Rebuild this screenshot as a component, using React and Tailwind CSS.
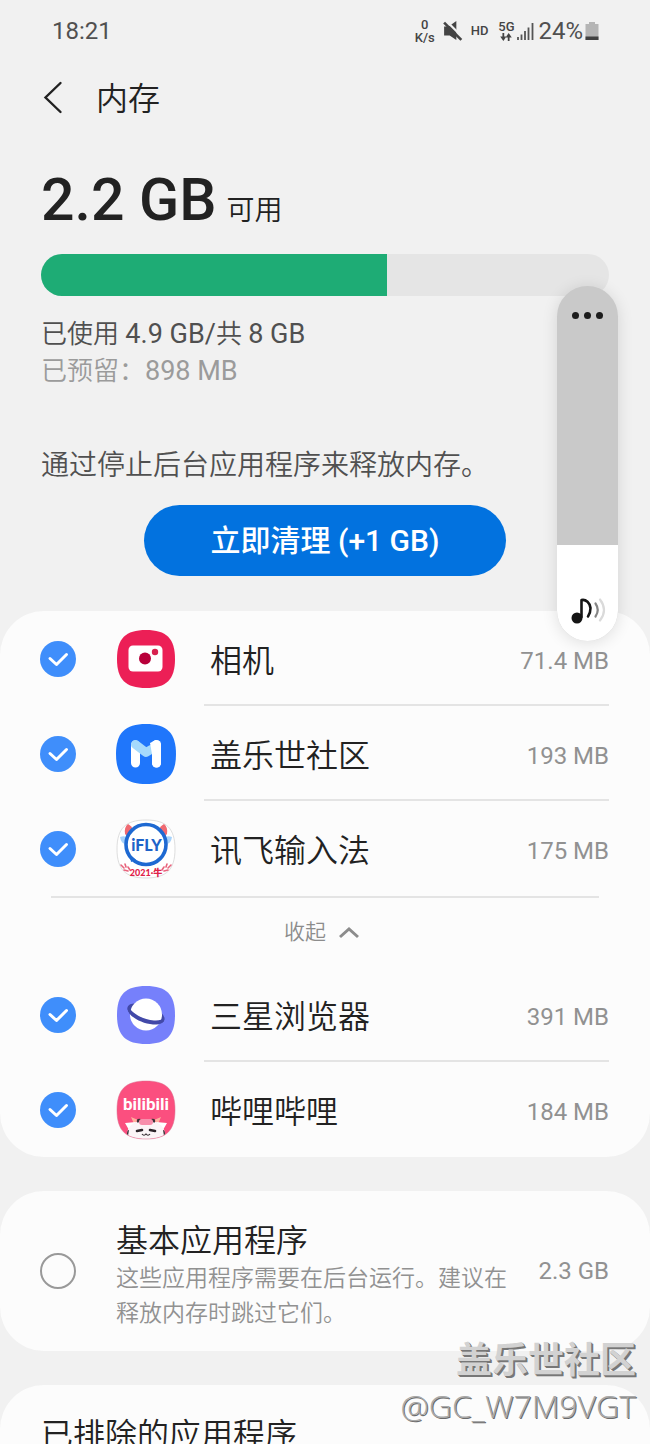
import React, { useState } from "react";

const SQUIRCLE =
  "M30 1C50.500 1 59 9.500 59 30C59 50.500 50.500 59 30 59C9.500 59 1 50.500 1 30C1 9.500 9.500 1 30 1Z";

function CameraIcon() {
  return (
    <svg viewBox="0 0 60 60" className="size-15" aria-hidden="true">
      <path d={SQUIRCLE} fill="#ec1f56" />
      <rect x="12.500" y="16.500" width="34" height="26" rx="4.500" fill="#fff" />
      <circle cx="29" cy="29.500" r="6" fill="#b8003a" />
      <circle cx="39" cy="23" r="3.200" fill="#d8214f" />
    </svg>
  );
}

function CommunityIcon() {
  return (
    <svg viewBox="0 0 60 60" className="size-15" aria-hidden="true">
      <path
        d="M30 0C51 0 60 9 60 30C60 51 51 60 30 60C9 60 0 51 0 30C0 9 9 0 30 0Z"
        fill="#1f76fb"
      />
      <path d="M19.500 21V39M40.500 21V39" stroke="#fff" strokeWidth="9" strokeLinecap="round" fill="none" />
      <path d="M19.500 20.500L30 28.500L35 25.500" stroke="#a5dafc" strokeWidth="9" strokeLinecap="round" strokeLinejoin="round" fill="none" />
      <path d="M40.500 20.500V39" stroke="#fff" strokeWidth="9" strokeLinecap="round" />
      <path d="M34 19L40 16L41 28L36 30Z" fill="#fff" />
    </svg>
  );
}

function IflyIcon() {
  return (
    <svg viewBox="0 0 60 60" className="size-15" aria-hidden="true">
      <path d={SQUIRCLE} fill="#fff" stroke="#dedede" strokeWidth="1" />
      <path d="M9 15Q8 8 12 5Q16 7 17 11L12 18Z" fill="#ef6a72" />
      <path d="M51 15Q52 8 48 5Q44 7 43 11L48 18Z" fill="#ef6a72" />
      <path d="M4 18Q9 16 11 19L9 25Q5 24 4 18ZM56 18Q51 16 49 19L51 25Q55 24 56 18Z" fill="#a7d2fa" />
      <circle cx="30" cy="25.500" r="20" fill="#fff" stroke="#1e69d2" strokeWidth="3.600" />
      <path d="M14 36L20 41L15 43Z" fill="#1e69d2" />
      <text x="30.500" y="31.500" textAnchor="middle" fontFamily="Lato, sans-serif" fontWeight="900" fontSize="16" fill="#1f63c9">
        iFLY
      </text>
      <path
        d="M5 46L8 49M9 45L10 48M8 51L12 52M12 48L14 51M55 46L52 49M51 45L50 48M52 51L48 52M48 48L46 51"
        stroke="#e8637c"
        strokeWidth="1.600"
        strokeLinecap="round"
      />
      <text x="30" y="57" textAnchor="middle" fontFamily="Lato, 'Noto Sans CJK SC', sans-serif" fontWeight="900" fontSize="9" fill="#df2148">
        2021·牛
      </text>
    </svg>
  );
}

function BrowserIcon() {
  return (
    <svg viewBox="0 0 60 60" className="size-15" aria-hidden="true">
      <path d={SQUIRCLE} fill="#7680fb" />
      <ellipse cx="30" cy="28.500" rx="19.500" ry="8.500" transform="rotate(20 30 28.500)" fill="#4249a8" />
      <circle cx="30" cy="29.500" r="16" fill="#fff" />
      <path
        d="M12.500 21C15 28 27 34.500 38 35.500C43 36 46.500 34.500 47.500 32.500C50 37 45 40 37 39.500C25 38.500 12 31 11.500 24Z"
        fill="#4249a8"
      />
    </svg>
  );
}

function BilibiliIcon() {
  return (
    <svg viewBox="0 0 60 60" className="size-15" aria-hidden="true">
      <defs>
        <clipPath id="bili-shape">
          <path d={SQUIRCLE} />
        </clipPath>
      </defs>
      <g clipPath="url(#bili-shape)">
        <rect width="60" height="60" fill="#fb4f7f" />
        <text x="30" y="30" textAnchor="middle" fontFamily="Roboto, sans-serif" fontWeight="700" fontSize="17" fill="#fff">
          bilibili
        </text>
        <path d="M15 37L22 40L18 44ZM45 37L38 40L42 44Z" fill="#ffb09e" />
        <path d="M9 43L20 42L13 50ZM51 43L40 42L47 50Z" fill="#fff" />
        <ellipse cx="30" cy="54" rx="19" ry="14" fill="#fbf5f7" />
        <path d="M21 42Q20 38 25 39L22 43ZM39 42Q40 38 35 39L38 43Z" fill="#3b3138" />
        <rect x="23" y="39" width="14" height="6" rx="3" fill="#f78fac" />
        <path d="M11 54Q11 50 13 50L12 56ZM49 54Q49 50 47 50L48 56Z" fill="#3b3138" />
        <path d="M21 51L26 50M34 50L39 51" stroke="#2d262b" strokeWidth="2.600" strokeLinecap="round" />
        <path d="M26 54Q28 56.500 30 54Q32 56.500 34 54" stroke="#2d262b" strokeWidth="1.200" fill="none" />
      </g>
      <path d={SQUIRCLE} fill="none" stroke="#d9688a" strokeOpacity="0.500" />
    </svg>
  );
}

function StatusBar() {
  return (
    <div className="flex h-[62px] shrink-0 items-center justify-between pl-13 pr-[51px] text-2xl leading-8 text-[#505050]">
      <time>18:21</time>
      <div className="flex items-center">
        <div className="flex w-5 flex-col items-center text-[13px] leading-[13px] font-medium text-[#444]">
          <span>0</span>
          <span>K/s</span>
        </div>
        <svg viewBox="0 0 18 18" className="ml-2 size-5" aria-label="静音">
          <path d="M1 5H5L12 0V17L6 13H1Z" fill="#444" />
          <path d="M3 0L18 15" stroke="#f1f1f1" strokeWidth="2" />
          <path d="M1 1.500L16.500 17" stroke="#444" strokeWidth="2.400" />
        </svg>
        <span className="ml-2 text-[13px] font-medium text-[#444]">HD</span>
        <div className="ml-2 flex w-5 flex-col items-center text-[13px] leading-3 font-medium text-[#444]">
          <span>5G</span>
          <svg viewBox="0 0 14 9" className="h-2 w-3.5" aria-hidden="true">
            <path d="M4 0V5M10 9V4" fill="none" stroke="#444" strokeWidth="2" />
            <path d="M0.500 4H7.500L4 9ZM6.500 5H13.500L10 0Z" fill="#444" />
          </svg>
        </div>
        <svg viewBox="0 0 18 18" className="size-4.5" aria-label="信号">
          <path d="M2 18V15M5.500 18V12.500M9 18V9M12.500 18V5.500M16.500 18V1" stroke="#555" strokeWidth="1.800" />
        </svg>
        <span className="ml-1">24%</span>
        <svg viewBox="0 0 14 20" className="ml-0.5 h-5 w-3.5" aria-label="电池">
          <path d="M4 1H10V3H13.500V19H0.500V3H4Z" fill="#b5b5b5" />
          <path d="M0.500 15.500H13.500V19H0.500Z" fill="#404040" />
        </svg>
      </div>
    </div>
  );
}

function AppRow({ icon, name, size, divided }) {
  const [checked, setChecked] = useState(true);
  return (
    <li>
      <label className="flex h-[95px] items-center pl-10">
        <span className="grid shrink-0 place-items-center">
          <input
            type="checkbox"
            aria-label={name}
            checked={checked}
            onChange={(e) => setChecked(e.target.checked)}
            className="col-start-1 row-start-1 size-9 appearance-none rounded-full border-2 border-[#999] checked:border-0 checked:bg-[#3f8efb]"
          />
          {checked && (
            <svg viewBox="0 0 36 36" className="pointer-events-none col-start-1 row-start-1 size-9" aria-hidden="true">
              <path d="M10 17.500L16.500 23.500L26.500 13.500" fill="none" stroke="#fff" strokeWidth="3" strokeLinecap="round" strokeLinejoin="round" />
            </svg>
          )}
        </span>
        <span className="ml-10 shrink-0">{icon}</span>
        <span
          className={
            "mr-[41px] ml-7 flex h-full grow items-center justify-between border-b-2 pt-1.5 pl-1.5 " +
            (divided ? "border-[#e4e4e4]" : "border-transparent")
          }
        >
          <span className="text-[32px] leading-10 font-[350] text-[#222]">{name}</span>
          <span className="text-2xl text-[#919191]">{size}</span>
        </span>
      </label>
    </li>
  );
}

function VolumePanel() {
  const [volume, setVolume] = useState(27);
  return (
    <div className="absolute top-[286px] right-8 flex h-[355px] w-[61px] flex-col justify-between overflow-hidden rounded-full bg-[#c9c9c9] shadow-[0_2px_16px_rgba(0,0,0,0.12)]">
      <div className="absolute inset-x-0 bottom-0 bg-white" style={{ height: `${volume}%` }} />
      <input
        type="range"
        aria-label="音量"
        min="0"
        max="100"
        value={volume}
        onChange={(e) => setVolume(Number(e.target.value))}
        className="absolute inset-0 h-full w-full opacity-0 [direction:rtl] [writing-mode:vertical-lr]"
      />
      <button type="button" aria-label="更多" className="relative flex h-[58px] items-center justify-center gap-[5px]">
        <span className="size-[7px] rounded-full bg-[#1c1c1c]" />
        <span className="size-[7px] rounded-full bg-[#1c1c1c]" />
        <span className="size-[7px] rounded-full bg-[#1c1c1c]" />
      </button>
      <svg viewBox="0 0 36 28" className="pointer-events-none relative mb-4 h-7 w-9 self-center" fill="none" strokeLinecap="round" aria-hidden="true">
        <circle cx="7" cy="21" r="5.500" fill="#151515" />
        <path d="M11.500 20V3C16 2 20 6 20.500 11Q20.500 16 18 19.500" stroke="#151515" strokeWidth="2.600" strokeLinejoin="round" />
        <path d="M25.500 6.500Q30 13 25.500 19.500" stroke="#858585" strokeWidth="2.200" />
        <path d="M30 2.500Q38 13 30 23.500" stroke="#dadada" strokeWidth="2.200" />
      </svg>
    </div>
  );
}

export default function App() {
  const [expanded, setExpanded] = useState(true);
  const [basic, setBasic] = useState(false);
  return (
    <div className="relative flex h-screen flex-col overflow-hidden bg-[#f1f1f1] font-[Roboto,'Noto_Sans_CJK_SC',sans-serif]">
      <StatusBar />
      <main className="grow overflow-y-auto [scrollbar-width:none]">
        <header className="flex h-[74px] items-center pl-10">
          <button type="button" aria-label="返回" className="flex w-14 items-center">
            <svg viewBox="0 0 26 36" className="h-9 w-[26px]" fill="none" aria-hidden="true">
              <path d="M20.500 2L5.500 16.500L20.500 31" stroke="#222" strokeWidth="2.400" strokeLinecap="round" />
            </svg>
          </button>
          <h1 className="text-[32px] leading-10 font-[350] text-[#222]">内存</h1>
        </header>

        <section className="px-[41px] pt-[26px]">
          <p className="flex h-19 items-baseline gap-2.5 text-[#222]">
            <span className="text-[59px] leading-19 font-medium">2.2 GB</span>
            <span className="text-[28px] leading-10 font-[350]">可用</span>
          </p>
          <div className="mt-4 h-[42px] overflow-hidden rounded-full bg-[#e5e5e5]">
            <div className="h-full bg-[#1eac75]" style={{ width: "61%" }} />
          </div>
          <p className="mt-5 text-[26px] leading-[37px] font-[350] text-[#505050]">
            已使用 <span className="text-[27px] font-normal">4.9 GB/</span>共{" "}
            <span className="text-[27px] font-normal">8 GB</span>
          </p>
          <p className="text-[26px] leading-[37px] font-[350] text-[#9b9b9b]">
            已预留：<span className="text-[27px] font-normal">898 MB</span>
          </p>
          <p className="mt-14 text-[28px] leading-10 font-[350] text-[#505050]">通过停止后台应用程序来释放内存。</p>
          <div className="mt-[19px] flex justify-center">
            <button type="button" className="h-[71px] w-[362px] rounded-full bg-[#0272df] text-[30px] font-medium text-white">
              立即清理 (+1 GB)
            </button>
          </div>
        </section>

        <section className="mt-[35px] rounded-[44px] bg-[#fcfcfc]">
          <ul>
            <AppRow icon={<CameraIcon />} name="相机" size="71.4 MB" divided />
            <AppRow icon={<CommunityIcon />} name="盖乐世社区" size="193 MB" divided />
            <AppRow icon={<IflyIcon />} name="讯飞输入法" size="175 MB" />
          </ul>
          <div className="mx-[51px] border-t-2 border-[#e4e4e4]">
            <button
              type="button"
              onClick={() => setExpanded(!expanded)}
              className="flex h-[69px] w-full items-center justify-center gap-3 pr-1.5 text-[21px] font-[350] text-[#8c8c8c]"
            >
              收起
              <svg viewBox="0 0 22 14" className="h-3.5 w-[22px]" fill="none" aria-hidden="true">
                <path d="M2 11L11 3L20 11" stroke="#8c8c8c" strokeWidth="3" />
              </svg>
            </button>
          </div>
          {expanded && (
            <ul>
              <AppRow icon={<BrowserIcon />} name="三星浏览器" size="391 MB" divided />
              <AppRow icon={<BilibiliIcon />} name="哔哩哔哩" size="184 MB" />
            </ul>
          )}
        </section>

        <label className="mt-[34px] flex h-40 items-center rounded-[44px] bg-[#fcfcfc] pr-[41px] pl-10">
          <input
            type="checkbox"
            aria-label="基本应用程序"
            checked={basic}
            onChange={(e) => setBasic(e.target.checked)}
            className="size-9 shrink-0 appearance-none rounded-full border-2 border-[#999] checked:bg-[#3f8efb]"
          />
          <span className="mr-5 ml-10 flex flex-1 flex-col pt-2.5 font-[350]">
            <span className="text-[32px] leading-10 text-[#222]">基本应用程序</span>
            <span className="text-[23px] leading-[35px] text-[#919191]">这些应用程序需要在后台运行。建议在释放内存时跳过它们。</span>
          </span>
          <span className="shrink-0 text-2xl text-[#919191]">2.3 GB</span>
        </label>

        <section className="mt-[34px] rounded-t-[44px] bg-[#fcfcfc] px-[41px] pt-[30px] pb-8">
          <h2 className="text-[32px] leading-10 font-[350] text-[#222]">已排除的应用程序</h2>
        </section>
      </main>

      <VolumePanel />

      <div className="pointer-events-none absolute right-3.5 bottom-4 flex flex-col items-end text-right">
        <span className="text-4xl leading-[46px] font-bold text-[#d2d2d2] [text-shadow:1px_1px_0_#777,2px_2px_0_#777]">
          盖乐世社区
        </span>
        <span className="font-['Open_Sans',sans-serif] text-[32px] leading-11 font-light text-[#a8a8a8] [text-shadow:1px_1px_0_#6b6b6b]">
          @GC_W7M9VGT
        </span>
      </div>
    </div>
  );
}
